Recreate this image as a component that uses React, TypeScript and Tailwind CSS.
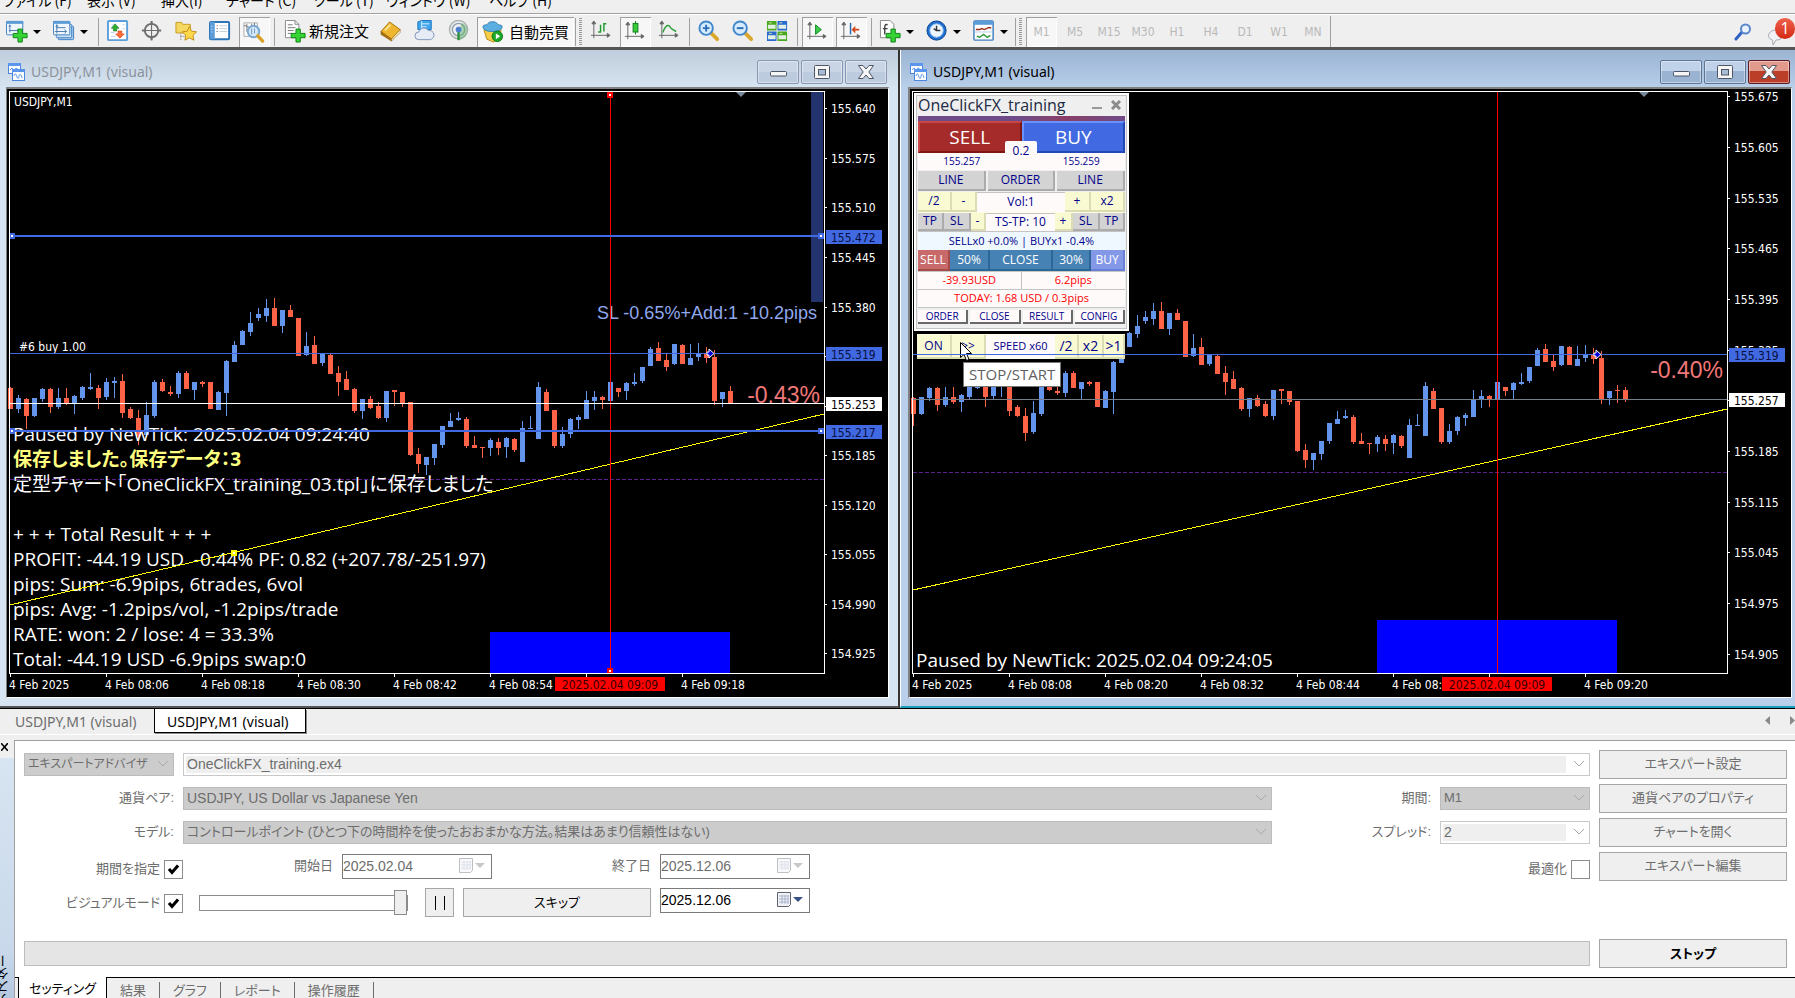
import * as React from "react";

type Candle = [string, number, number, number, number];

// color, high, body top, body bottom, low (steps below TOP_PRICE)
const TOP_PRICE = 155.4145;
const STEP = 0.000437;

const candles: Candle[] = [
  ["r", 320, 323, 387, 387], ["b", 345, 354, 387, 399], ["r", 354, 357, 408, 447],
  ["b", 354, 354, 408, 411], ["b", 323, 327, 357, 366], ["r", 323, 327, 381, 399],
  ["b", 323, 354, 381, 387], ["r", 323, 354, 371, 375], ["b", 345, 348, 371, 402],
  ["b", 318, 321, 354, 360], ["b", 279, 321, 327, 330], ["r", 315, 324, 354, 387],
  ["b", 294, 306, 351, 360], ["b", 291, 303, 309, 354], ["r", 282, 303, 399, 414],
  ["r", 381, 387, 414, 417], ["r", 390, 414, 468, 495], ["b", 366, 405, 465, 471],
  ["b", 300, 306, 408, 414], ["r", 297, 306, 333, 336], ["r", 318, 336, 342, 348],
  ["b", 273, 279, 342, 354], ["r", 273, 279, 327, 327], ["b", 306, 306, 330, 360],
  ["r", 303, 306, 312, 321], ["r", 306, 306, 387, 387], ["b", 333, 336, 390, 390],
  ["b", 240, 243, 339, 408], ["b", 183, 195, 246, 246], ["b", 150, 153, 195, 195],
  ["b", 96, 129, 156, 168], ["b", 84, 102, 114, 123], ["b", 57, 84, 108, 126],
  ["r", 54, 84, 138, 138], ["b", 90, 90, 138, 159], ["r", 75, 90, 111, 111],
  ["r", 114, 114, 228, 228], ["b", 156, 198, 225, 228], ["r", 168, 195, 252, 252],
  ["b", 222, 222, 249, 258], ["r", 222, 225, 282, 282], ["r", 258, 279, 306, 348],
  ["r", 273, 297, 330, 330], ["r", 324, 327, 393, 399], ["b", 357, 357, 393, 417],
  ["r", 348, 357, 384, 387], ["r", 366, 378, 414, 417], ["b", 333, 333, 414, 426],
  ["r", 330, 330, 336, 378], ["r", 336, 336, 370, 381], ["r", 366, 366, 525, 528],
  ["r", 504, 522, 552, 579], ["b", 531, 531, 555, 585], ["b", 492, 492, 534, 555],
  ["b", 438, 438, 495, 504], ["b", 399, 423, 441, 441], ["b", 396, 414, 420, 423],
  ["r", 411, 417, 498, 504], ["r", 468, 495, 504, 504], ["r", 501, 501, 504, 534],
  ["b", 474, 480, 504, 528], ["r", 474, 486, 504, 525], ["b", 471, 474, 501, 534],
  ["r", 474, 477, 510, 516], ["b", 423, 444, 546, 546], ["b", 408, 444, 447, 447],
  ["b", 306, 321, 477, 477], ["r", 327, 336, 393, 393], ["r", 390, 390, 498, 504],
  ["b", 441, 462, 498, 504], ["b", 414, 417, 462, 474], ["b", 405, 411, 420, 447],
  ["b", 333, 360, 417, 417], ["b", 333, 351, 363, 390], ["r", 348, 351, 360, 387],
  ["b", 306, 306, 363, 363], ["r", 324, 324, 336, 351], ["b", 306, 309, 333, 360],
  ["b", 279, 306, 312, 318], ["b", 261, 261, 303, 309], ["b", 201, 207, 258, 258],
  ["r", 186, 204, 243, 243], ["r", 222, 240, 261, 273], ["b", 192, 192, 252, 255],
  ["r", 192, 195, 252, 252], ["b", 192, 234, 255, 255], ["b", 189, 222, 231, 243],
  ["r", 201, 222, 234, 249], ["r", 210, 231, 363, 375], ["b", 336, 336, 357, 381],
  ["r", 318, 333, 370, 370],
];

const candlesRight: Candle[] = [
  ...candles.slice(2, 90),
  ["r", 316, 331, 333, 373],
  ["r", 322, 331, 363, 369],
];

interface ChartProps {
  base: number;
  scale: number;
  data: Candle[];
  prices: number[];
  times: string[];
  tags: { price: number; white?: boolean }[];
  cursorX: number;
  block: { x: number; y: number };
  trend: [number, number];
  purple: number;
  arrow: number;
  children?: React.ReactNode;
  under?: React.ReactNode;
  over?: React.ReactNode;
}

const Chart: React.FC<ChartProps> = (p) => {
  const y = (price: number) => Math.round(p.base + (155.319 - price) * p.scale);
  const yc = (v: number) => y(TOP_PRICE - v * STEP);

  return (
    <div className="relative flex-1 min-w-0 overflow-hidden bg-black font-['DejaVu_Sans_Condensed','DejaVu_Sans',sans-serif] text-xs text-white">
      <svg className="absolute inset-0 h-full w-full" shapeRendering="crispEdges">
        <svg y="100%" overflow="visible">
          <rect x={p.block.x} y={p.block.y} width={240} height={-24 - p.block.y} fill="#0000ff" />
        </svg>
        {p.under}
        {p.data.map(([c, h, t, b, l], i) => {
          const x = 3 + i * 8;
          const fill = c === "r" ? "#ff6347" : "#6495ed";
          return (
            <g key={i} fill={fill}>
              <rect x={x} y={yc(h)} width={1} height={Math.max(1, yc(l) - yc(h))} />
              <rect x={x - 2} y={yc(t)} width={5} height={Math.max(1, yc(b) - yc(t))} />
            </g>
          );
        })}
        <line x1={3} x2="100%" y1={p.purple} y2={p.purple} stroke="#5a1f8a" strokeDasharray="4 2" />
      </svg>
      {p.children}
      <svg className="pointer-events-none absolute inset-0 h-full w-full" fill="#fff">
        <g shapeRendering="crispEdges">
          <svg x="100%" overflow="visible">
            <line x1={-878} y1={p.trend[0]} x2={-64} y2={p.trend[1]} stroke="#ffff00" />
          </svg>
          <rect x={p.cursorX} y={3} width={1} height="100%" fill="#ff0000" />
          {p.over}
          <svg x="100%" overflow="visible">
            <rect x={-64} y={2} width={64} height={1000} fill="#000" />
          </svg>
          <svg y="100%" overflow="visible">
            <rect x={0} y={-24} width="100%" height={24} fill="#000" />
            <rect x={2} y={-24} width={816} height={1} />
            {p.times.map((_, i) => (
              <rect key={i} x={3 + i * 96} y={-23} width={1} height={3} />
            ))}
          </svg>
          <rect x={2} y={2} width={816} height={1} />
          <rect x={2} y={2} width={1} height={583} />
          <svg x="100%" overflow="visible">
            <rect x={-64} y={2} width={1} height={583} />
            {p.prices.map((v) => (
              <rect key={v} x={-63} y={y(v)} width={2} height={1} />
            ))}
          </svg>
        </g>
        <path
          d={`M${p.arrow - 3} ${p.base - 1}h2v-3l5 4.500l-5 4.500v-3h-2z`}
          fill="#0000e0"
          stroke="#fff"
        />
        <svg x="100%" overflow="visible">
          <path d="M-152 3h10l-5 5z" fill="#778899" />
          {p.prices.map((v) => (
            <text key={v} x={-57} y={y(v) + 5}>{v.toFixed(3)}</text>
          ))}
          {p.tags.map((t) => (
            <g key={t.price}>
              <rect x={-62} y={y(t.price) - 6} width={56} height={14} fill={t.white ? "#fff" : "#4169e1"} />
              <text x={-57} y={y(t.price) + 6} fill={t.white ? "#000" : "#071040"}>
                {t.price.toFixed(3)}
              </text>
            </g>
          ))}
        </svg>
        <svg y="100%" overflow="visible">
          {p.times.map((t, i) => (
            <text key={i} x={2 + i * 96} y={-8}>{t}</text>
          ))}
          <rect x={p.cursorX - 55} y={-20} width={110} height={14} fill="#ff0000" />
          <text x={p.cursorX} y={-8} fill="#300" textAnchor="middle">2025.02.04 09:09</text>
        </svg>
      </svg>
    </div>
  );
};

/* ---------- MDI window ---------- */

const WinButton: React.FC<{ kind: string; active?: boolean }> = ({ kind, active }) => {
  let cls = "border-[#8895b3] bg-linear-to-b from-[#c9d5e5] from-50% to-[#bccbde] to-50%";
  if (active) cls = "border-[#5f7596] bg-linear-to-b from-[#bfd2ea] from-45% to-[#9ab3d2] to-45%";
  if (active && kind === "close") cls = "border-[#5a1a20] bg-linear-to-b from-[#e29a8c] from-45% to-[#bb3f28] to-45%";
  return (
    <button
      aria-label={kind}
      className={`flex h-6 w-[42px] items-center justify-center rounded-xs border shadow-[inset_0_0_0_1px_rgba(255,255,255,0.4)] ${cls}`}
    >
      <svg width="20" height="18" viewBox="0 0 20 18" fill="#f6f6f6" stroke="#4d5566">
        {kind === "min" && <rect x="2.5" y="8.5" width="16" height="4.500" rx="1" />}
        {kind === "max" && (
          <>
            <rect x="2.5" y="2.5" width="15" height="13" rx="1" />
            <rect x="6.500" y="6.500" width="7" height="5.500" fill="#a9bbd3" />
          </>
        )}
        {kind === "close" && (
          <path d="M2.500 2.500h4.500l3 3.500 3-3.500h4.500l-4.700 6.500 4.700 6.500h-4.500l-3-3.500-3 3.500h-4.500l4.700-6.500z" />
        )}
      </svg>
    </button>
  );
};

const ChartIcon = () => (
  <svg width="18" height="18" viewBox="0 0 18 18">
    <rect x="0.500" y="0.500" width="12" height="10" fill="#fff" stroke="#4a86e0" />
    <path d="M0 0h13v3h-13z" fill="#5a96ee" />
    <path d="M2 7l2-2 2 3 2-3 3 2" stroke="#5a96ee" fill="none" />
    <rect x="4.500" y="6.500" width="12" height="11" fill="#fff" stroke="#4a86e0" />
    <path d="M4 6h13v3h-13z" fill="#5a96ee" />
    <path d="M6 13c1-4 2-2 3 1s2 1 2-1 2-3 3 2" stroke="#5a96ee" fill="none" />
  </svg>
);

const ChartWindow: React.FC<{ active?: boolean; children: React.ReactNode }> = ({ active, children }) => (
  <section
    className={
      active
        ? "flex min-w-0 flex-col border-b-2 border-l border-b-[#1c9fb8] border-l-white bg-[#b9cfea] bg-linear-to-b from-[#9ab4d2] to-[#b9cfea] to-[38px] pr-[3px] pb-2 pl-[7px]"
        : "flex min-w-0 flex-col border-r-2 border-b-2 border-r-[#333] border-b-[#555] bg-[#d7e4f1] bg-linear-to-b from-[#bfcddc] to-[#d7e4f1] to-[38px] pr-[9px] pb-2 pl-[6px]"
    }
  >
    <header className="flex h-[37px] shrink-0 items-center gap-[5px] pt-[6px] pr-[2px] pl-[2px]">
      <ChartIcon />
      <h2 className={`font-['Noto_Sans','Open_Sans',sans-serif] text-[14px] ${active ? "text-black" : "text-[#8b939c]"}`}>
        USDJPY,M1 (visual)
      </h2>
      <div className="ml-auto flex gap-[2px]">
        <WinButton kind="min" active={active} />
        <WinButton kind="max" active={active} />
        <WinButton kind="close" active={active} />
      </div>
    </header>
    <div
      className={`flex flex-1 border-t-2 border-r border-b border-t-[#808080] border-r-white border-b-white ${
        active ? "border-l-2 border-l-[#808080]" : "border-l border-l-[#808080]"
      }`}
    >
      {children}
    </div>
  </section>
);

/* ---------- toolbar ---------- */

const Plus = () => (
  <path d="M12.500 9.500h4.500v4.500h5v4.500h-5v4.500h-4.500v-4.500h-5v-4.500h5z" fill="#35d335" stroke="#0c8412" />
);
const Axes = () => (
  <path d="M4 3v16M1 16h18M4 1l-2 3h4zM21 16l-3-2v4z" stroke="#666" fill="#666" />
);

const icons: Record<string, React.ReactNode> = {
  newChart: (
    <>
      <rect x="0.500" y="1.500" width="17" height="14" rx="1" fill="#eef6fd" stroke="#3f7fc0" />
      <path d="M0 1h18v3h-18z" fill="#5a9bd8" />
      <path d="M4 6v7M3 11h10M3 7l1-2 1 2M12 10l2 1-2 1" stroke="#4a7bb0" fill="none" />
      <Plus />
    </>
  ),
  profiles: (
    <>
      <rect x="5.500" y="6.500" width="16" height="14" rx="1" fill="#a9cdf0" stroke="#3f7fc0" />
      <rect x="3.500" y="4.500" width="16" height="14" rx="1" fill="#c9e0f6" stroke="#3f7fc0" />
      <rect x="0.500" y="1.500" width="17" height="14" rx="1" fill="#eef6fd" stroke="#3f7fc0" />
      <path d="M0 1h18v3h-18z" fill="#5a9bd8" />
      <path d="M4 5v9M2 12h12M3 7l1-2 1 2M3 8h10M12 10l2 2-2 2" stroke="#4a7bb0" fill="none" />
    </>
  ),
  market: (
    <>
      <rect x="1" y="1" width="20" height="20" rx="1" fill="#fff" stroke="#5aa0dc" strokeWidth="2" />
      <path d="M5 5h2M16 5h3M5 9h1M16 9h3M4 13h4M4 17h5" stroke="#bcd6ee" />
      <path d="M8.500 4l4 4.500h-2.200v3h-3.600v-3H4.500z" fill="#2faf2f" stroke="#15781a" strokeWidth="0.600" />
      <path d="M13.500 19l-4.500-4.500h2.500v-3h4v3H18z" fill="#ff6a3a" stroke="#c43a12" strokeWidth="0.600" />
    </>
  ),
  crosshair: (
    <g fill="none" stroke="#6e6e6e">
      <circle cx="11" cy="11" r="7" strokeWidth="2" />
      <path d="M11 1v20M1 11h20" strokeWidth="1.200" />
      <path d="M11 1v4M11 17v4M1 11h4M17 11h4" strokeWidth="2.200" />
    </g>
  ),
  folder: (
    <>
      <path d="M1 2.500h6l1 2h8v9H1z" fill="#f5d860" stroke="#c79a20" />
      <path d="M6 14v8M6 17h5" stroke="#777" strokeDasharray="1 1" fill="none" />
      <path d="M15 7l2.300 4.700 5.200.7-3.800 3.600 1 5.100-4.700-2.500-4.700 2.500 1-5.100-3.800-3.600 5.200-.7z" fill="#ffd84a" stroke="#c48a14" />
    </>
  ),
  panel: (
    <>
      <rect x="1" y="2" width="20" height="18" rx="1" fill="#fff" stroke="#2e75b8" strokeWidth="2" />
      <path d="M1 2h5v18H1z" fill="#5a9bd8" />
      <path d="M3 6v1M3 9v1M3 12v1" stroke="#fff" />
      <path d="M8 6h1" stroke="#d33" />
      <path d="M8 9h1M8 12h1" stroke="#345" />
      <path d="M11 6h8M11 9h8M11 12h8" stroke="#c3cfda" />
    </>
  ),
  tester: (
    <>
      <path d="M1 2h14v14H1z" fill="#fff" stroke="#aaa" />
      <path d="M4 3v8M4 6h2M9 3v6M12 2v6M1 5h3" stroke="#777" fill="none" />
      <circle cx="11" cy="11" r="6" fill="#cfe6fa" fillOpacity="0.850" stroke="#7aa6d4" strokeWidth="2" />
      <path d="M9 8v6M12 8v5" stroke="#6f94bd" />
      <path d="M15.500 15.500l5 5.500" stroke="#d9a126" strokeWidth="3.500" strokeLinecap="round" />
    </>
  ),
  order: (
    <>
      <path d="M1.500 0.500h10l4 4v14h-14z" fill="#fdfdfd" stroke="#888" />
      <path d="M11.500 0.500v4h4" fill="none" stroke="#888" />
      <path d="M4 5h5M4 8h8M4 11h6M4 14h4" stroke="#777" />
      <Plus />
    </>
  ),
  book: (
    <>
      <path d="M1 12l9-10 11 8-9 10z" fill="#eeb52e" stroke="#a87410" />
      <path d="M1 12v3l11 7v-2z" fill="#a8700f" stroke="#94640c" strokeWidth="0.600" />
      <path d="M12 22l9-9v-3l-9 10z" fill="#fff4c8" stroke="#94640c" strokeWidth="0.600" />
      <path d="M5 11l6-6" stroke="#fbe28c" strokeWidth="2" />
    </>
  ),
  cloud: (
    <>
      <path d="M4 2l4-1.500h10V10H4z" fill="#3fa6ee" stroke="#1b74bd" />
      <path d="M8 4h8M8 7h5M8 1v9" stroke="#d8efff" />
      <path d="M5 20.500a4 4 0 010-8 5.500 5.500 0 0110-1.500 4.800 4.800 0 012 9.500z" fill="#e6ecf6" stroke="#7f93b8" />
    </>
  ),
  signal: (
    <>
      <g fill="none" stroke="#a9b1b1">
        <circle cx="11" cy="10" r="9.500" strokeWidth="1.500" />
        <circle cx="11" cy="10" r="6.500" strokeWidth="1.500" stroke="#8fa0b0" />
      </g>
      <path d="M11 10v11a10 10 0 009-9a9.500 9.500 0 00-5-9z" fill="#5fb46a" fillOpacity="0.500" />
      <path d="M11 10v11" stroke="#2f8f3c" strokeWidth="2.500" />
      <circle cx="11" cy="10" r="3" fill="#4a7fd0" />
    </>
  ),
  auto: (
    <>
      <path d="M2 9l3 10 7 3 6-4 2-9z" fill="#f5cc48" stroke="#b98a18" />
      <path d="M1 6c0-3 5-1 5-3 1-3 9-3 10 0 0 2 5 0 5 3s-4 5-10 5S1 9 1 6z" fill="#5aaee0" stroke="#2e7fb5" />
      <circle cx="16" cy="16" r="5.500" fill="#20a828" stroke="#0d7a14" />
      <path d="M14.500 13l4.500 3-4.500 3z" fill="#fff" />
    </>
  ),
  bars: (
    <>
      <Axes />
      <path d="M11 5v8M8.500 12.500h3M14.500 3v9M14 4h3" stroke="#1c9a2c" strokeWidth="1.500" fill="none" />
    </>
  ),
  candle: (
    <>
      <Axes />
      <path d="M12 0v14" stroke="#127a1c" />
      <rect x="9.500" y="2.500" width="5" height="9" fill="#35cf35" stroke="#127a1c" />
    </>
  ),
  line: (
    <>
      <Axes />
      <path d="M5 13c3-8 6-9 8-5 2 2 4 3 6 4" stroke="#2ca03a" strokeWidth="1.500" fill="none" />
    </>
  ),
  zoomIn: (
    <>
      <path d="M13 13l7 7" stroke="#dba62c" strokeWidth="4" strokeLinecap="round" />
      <circle cx="8.500" cy="8.500" r="7" fill="#d6ecfc" stroke="#3f86cc" strokeWidth="2" />
      <path d="M8.500 5v7M5 8.500h7" stroke="#2a6cb8" strokeWidth="2" />
    </>
  ),
  zoomOut: (
    <>
      <path d="M13 13l7 7" stroke="#dba62c" strokeWidth="4" strokeLinecap="round" />
      <circle cx="8.500" cy="8.500" r="7" fill="#d6ecfc" stroke="#3f86cc" strokeWidth="2" />
      <path d="M5 8.500h7" stroke="#2a6cb8" strokeWidth="2" />
    </>
  ),
  tile: (
    <>
      <path d="M1 1h10v10H1zM12 12h10v10H12z" fill="#4aa81e" />
      <path d="M12 1h10v10H12zM1 12h10v10H1z" fill="#2a6ad0" />
      <path d="M2 5h8v4H2z M13 5h8v4h-8z M2 16h8v4H2z M13 16h8v4h-8z" fill="#e2f0e4" />
      <path d="M3 3h3M14 3h3M3 14h3M14 14h3" stroke="#cfe6a8" />
    </>
  ),
  scroll: (
    <>
      <Axes />
      <path d="M10 4l6 5-6 5z" fill="#3ccb4a" stroke="#128a22" />
    </>
  ),
  shift: (
    <>
      <Axes />
      <path d="M11 2v12" stroke="#1f66b0" strokeWidth="1.500" />
      <path d="M12 9l4-4v3h4v2h-4v3z" fill="#d2491c" />
    </>
  ),
  indicators: (
    <>
      <path d="M1.500 0.500h10l4 4v14h-14z" fill="#fdfdfd" stroke="#888" />
      <path d="M9 5c-3-1-3 1-3 4v6M4 9h5" stroke="#444" fill="none" strokeWidth="1.500" />
      <Plus />
    </>
  ),
  clock: (
    <>
      <circle cx="11" cy="11" r="10" fill="#1f6fd0" stroke="#0c458f" />
      <circle cx="11" cy="11" r="7" fill="#eef6fd" stroke="#8fc0f0" />
      <path d="M11 6v5h4M8 9l3 2" stroke="#333" strokeWidth="1.500" fill="none" />
    </>
  ),
  template: (
    <>
      <rect x="1" y="1" width="20" height="20" rx="1" fill="#fff" stroke="#3f7fc0" strokeWidth="1.500" />
      <path d="M1 1h20v4H1z" fill="#5a9bd8" />
      <path d="M3 10h4l2-1 3 1 4-2h3" stroke="#9a2f1a" strokeWidth="1.500" fill="none" />
      <path d="M2 12.500h18" stroke="#b9cfe6" />
      <path d="M4 17l3 1 4-3 4 3 3-2" stroke="#2f9a3a" strokeWidth="1.500" fill="none" />
    </>
  ),
};

const Icon: React.FC<{ name: string }> = ({ name }) => (
  <svg width="23" height="23" viewBox="0 0 24 24" className="shrink-0">{icons[name]}</svg>
);

const pressedCls = "border-t border-l border-[#a0a0a0] bg-[#f7f7f7] shadow-[inset_-1px_-1px_0_#fff]";

const Tool: React.FC<{ name: string; pressed?: boolean }> = ({ name, pressed }) => (
  <button aria-label={name} className="flex w-[34px] items-center justify-center">
    <span className={`flex h-[30px] w-[31px] items-center justify-center ${pressed ? pressedCls : ""}`}>
      <Icon name={name} />
    </span>
  </button>
);

const DropTool: React.FC<{ name: string }> = ({ name }) => (
  <button aria-label={name} className="flex w-[47px] items-center gap-1 pl-[5px]">
    <Icon name={name} />
    <svg width="8" height="4" className="shrink-0"><path d="M0 0h8l-4 4z" /></svg>
  </button>
);

const Sep = () => (
  <span className="flex w-[6px] justify-center"><i className="h-7 w-px bg-[#a0a0a0]" /></span>
);

const Grip = () => (
  <span className="flex w-[9px] items-center justify-between border-l border-[#a0a0a0] pl-[3px]">
    <i className="h-7 w-[3px] bg-[repeating-linear-gradient(#9a9a9a_0_1px,#efefef_1px_2px)]" />
  </span>
);

const menus = [
  ["ファイル (F)", "w-[84px]"],
  ["表示 (V)", "w-[74px]"],
  ["挿入(I)", "w-[65px]"],
  ["チャート (C)", "w-[87px]"],
  ["ツール (T)", "w-[73px]"],
  ["ウィンドウ (W)", "w-[103px]"],
  ["ヘルプ (H)", "w-[80px]"],
];

const Toolbar = () => (
  <div className="flex h-9 shrink-0 items-center border-t border-b-3 border-t-white border-b-[#555] pt-px pl-px font-['Noto_Sans_CJK_JP',sans-serif] text-[15px]">
    <DropTool name="newChart" />
    <DropTool name="profiles" />
    <Sep />
    <Tool name="market" />
    <Tool name="crosshair" />
    <Tool name="folder" />
    <Tool name="panel" />
    <Tool name="tester" pressed />
    <Sep />
    <button className="flex w-[97px] items-center gap-[2px] pl-[7px] whitespace-nowrap">
      <Icon name="order" />
      新規注文
    </button>
    <Tool name="book" />
    <Tool name="cloud" />
    <Tool name="signal" />
    <button className={`mx-px flex h-[30px] w-[97px] items-center gap-1 pl-1 whitespace-nowrap ${pressedCls}`}>
      <Icon name="auto" />
      自動売買
    </button>
    <Grip />
    <Tool name="bars" />
    <Tool name="candle" pressed />
    <Tool name="line" />
    <Sep />
    <Tool name="zoomIn" />
    <Tool name="zoomOut" />
    <Tool name="tile" />
    <Sep />
    <Tool name="scroll" pressed />
    <Tool name="shift" pressed />
    <Sep />
    <DropTool name="indicators" />
    <DropTool name="clock" />
    <DropTool name="template" />
    <Grip />
    {["M1", "M5", "M15", "M30", "H1", "H4", "D1", "W1", "MN"].map((t) => (
      <button key={t} className="flex w-[34px] justify-center font-['DejaVu_Sans_Condensed',sans-serif] text-xs text-[#b9b9b9]">
        <span className={`flex h-[30px] w-[31px] items-center justify-center ${t === "M1" ? pressedCls : ""}`}>{t}</span>
      </button>
    ))}
    <i className="h-full w-px bg-[#a0a0a0]" />
    <button aria-label="search" className="mr-[15px] ml-auto">
      <svg width="18" height="18" viewBox="0 0 18 18">
        <path d="M8 9l-6 7" stroke="#2f62c4" strokeWidth="3" strokeLinecap="round" />
        <circle cx="11.500" cy="6" r="4.500" fill="#eaf2fd" stroke="#5a86cc" strokeWidth="2" />
      </svg>
    </button>
    <button aria-label="messages" className="relative h-7 w-7">
      <svg width="18" height="18" className="absolute bottom-0 left-0">
        <path d="M8 2c9-2 11 10 1 10l-3 5-.5-5C-1 10 1 3 8 2z" fill="#f2f2f6" stroke="#a8a8b0" />
      </svg>
      <span className="absolute top-0 right-0 flex h-[21px] w-5 items-center justify-center rounded-full bg-linear-to-b from-[#f0604a] to-[#d32410] font-['Open_Sans',sans-serif] text-base text-white">1</span>
    </button>
  </div>
);

/* ---------- OneClickFX panel ---------- */

const grayBtn = "border-r-2 border-b-2 border-[#ababab] bg-[#d3d3d3]";
const creamBtn = "border-r-2 border-b-2 border-[#dcdcb4] bg-[#fafad2]";
const steelBtn = "border-r-2 border-b-2 border-[#2c6797] bg-[#4682b4] text-white";

const OneClickPanel = () => (
  <div className="absolute top-1 left-1 w-[215px] border-2 border-white bg-[#c4c4c4] font-['Open_Sans',sans-serif] text-xs font-medium text-[#00008b]">
    <div className="m-px bg-[#efefef] px-px pb-1">
      <div className="flex h-5 items-center justify-between pr-1 pb-[2px]">
        <h3 className="text-[16px] leading-4 text-[#222a44]">OneClickFX_training</h3>
        <div className="flex gap-2">
          <button aria-label="minimize panel">
            <svg width="11" height="10"><path d="M0 8h10" stroke="#999" strokeWidth="2" /></svg>
          </button>
          <button aria-label="close panel">
            <svg width="10" height="10"><path d="M1 1l8 8M9 1l-8 8" stroke="#8a8a8a" strokeWidth="3" /></svg>
          </button>
        </div>
      </div>
      <div className="h-[5px] bg-linear-to-r from-[#6f4a88] from-50% via-[#8a3f66] via-70% to-[#6f4a88]" />
      <div className="relative">
        <div className="grid h-8 grid-cols-2 text-[19px] text-white">
          <button className="border-2 border-[#7e1616] border-t-[#c84848] border-l-[#c84848] bg-[#a52a2a] leading-7">SELL</button>
          <button className="border-2 border-[#2248b8] border-t-[#6a92ff] border-l-[#6a92ff] bg-[#4169e1] leading-7">BUY</button>
        </div>
        <div className="flex h-[17px] items-center justify-around gap-8 bg-[#fffafa] text-[10px]">
          <span>155.257</span>
          <span>155.259</span>
        </div>
        <span className="absolute top-5 left-[87px] flex h-5 w-8 items-center justify-center rounded-xs bg-[#fffafa]">0.2</span>
      </div>
      <div className="grid h-[22px] grid-cols-3 gap-[2px] py-px leading-[18px]">
        <button className={grayBtn}>LINE</button>
        <button className={grayBtn}>ORDER</button>
        <button className={grayBtn}>LINE</button>
      </div>
      <div className="grid h-[21px] grid-cols-[34px_25px_1fr_26px_34px] bg-[#fffde0] pb-px leading-[18px]">
        <button className={creamBtn}>/2</button>
        <button className={creamBtn}>-</button>
        <span className="border-t border-[#c4c4c4] bg-[#fffafa] text-center">Vol:1</span>
        <button className={creamBtn}>+</button>
        <button className={creamBtn}>x2</button>
      </div>
      <div className="grid h-[18px] grid-cols-[26px_27px_15px_1fr_18px_27px_25px] leading-4">
        <button className={grayBtn}>TP</button>
        <button className={grayBtn}>SL</button>
        <button className={creamBtn}>-</button>
        <span className="border-t border-[#c4c4c4] bg-[#fffafa] text-center leading-[15px]">TS-TP: 10</span>
        <button className={creamBtn}>+</button>
        <button className={grayBtn}>SL</button>
        <button className={grayBtn}>TP</button>
      </div>
      <p className="h-[19px] border-t border-[#c4c4c4] bg-[#f0f8ff] text-center text-[11px] leading-[18px] whitespace-pre">SELLx0 +0.0% | BUYx1 -0.4%</p>
      <div className="grid h-[21px] grid-cols-[32px_40px_1fr_38px_34px] leading-[19px]">
        <button className="border-r-2 border-b-2 border-[#a84a4a] bg-[#c86a6a] text-white">SELL</button>
        <button className={steelBtn}>50%</button>
        <button className={steelBtn}>CLOSE</button>
        <button className={steelBtn}>30%</button>
        <button className="border-r-2 border-b-2 border-[#6a80d8] bg-[#8498e8] text-white">BUY</button>
      </div>
      <div className="grid h-[18px] grid-cols-2 border-t border-[#c4c4c4] bg-[#fffafa] text-center text-[11px] leading-4 text-[#ff0000]">
        <span className="border-r border-[#c4c4c4]">-39.93USD</span>
        <span>6.2pips</span>
      </div>
      <p className="mb-[2px] h-[19px] border-t border-b border-[#c4c4c4] bg-[#fffafa] text-center text-[11px] leading-4 text-[#ff0000]">
        TODAY: 1.68 USD / 0.3pips
      </p>
      <div className="grid grid-cols-4 gap-[2px] text-[10px] leading-3">
        {["ORDER", "CLOSE", "RESULT", "CONFIG"].map((t) => (
          <button key={t} className="border-r-2 border-b-2 border-[#696969] bg-[#fffafa]">{t}</button>
        ))}
      </div>
    </div>
  </div>
);

const SpeedStrip = () => (
  <div className="absolute top-[245px] left-[7px] grid h-6 w-[208px] grid-cols-[35px_34px_1fr_24px_25px_21px] border-t border-[#fffde0] bg-[#fffde0] font-['Open_Sans',sans-serif] text-xs leading-[22px] font-medium text-[#00008b]">
    <button className={creamBtn}>ON</button>
    <button className={creamBtn}>&gt;&gt;</button>
    <span className="bg-[#fffafa] text-center text-[11px]">SPEED x60</span>
    <button className={`${creamBtn} text-sm`}>/2</button>
    <button className={`${creamBtn} text-sm`}>x2</button>
    <button className={`${creamBtn} text-sm`}>&gt;1</button>
  </div>
);

/* ---------- strategy tester ---------- */

const Chevron = () => (
  <svg width="10" height="6" className="pointer-events-none shrink-0"><path d="M0 0l5 5 5-5" fill="none" stroke="#a8a8a8" /></svg>
);

const Combo: React.FC<{ id: string; value: string; editable?: boolean; className?: string }> = ({
  id,
  value,
  editable,
  className = "",
}) => (
  <div
    className={`flex h-[23px] items-center border pr-[5px] ${
      editable ? "border-[#c9c9c9] bg-white" : "border-[#bcbcbc] bg-[#cccccc]"
    } ${className}`}
  >
    <select
      id={id}
      disabled
      aria-label={value}
      className={`min-w-0 flex-1 appearance-none overflow-hidden text-clip pl-[3px] text-[#6d6d6d] opacity-100 ${
        editable ? "m-[2px] mr-2 h-[17px] bg-[#efefef] pl-px leading-[17px]" : "bg-transparent"
      }`}
    >
      <option>{value}</option>
    </select>
    <Chevron />
  </div>
);

const DateBox: React.FC<{ id: string; value: string; enabled?: boolean }> = ({ id, value, enabled }) => (
  <div className="flex h-[25px] w-[150px] items-center border border-[#7a7a7a] bg-white pr-[6px] text-[14px]">
    <input
      id={id}
      aria-label={value}
      defaultValue={value}
      disabled={!enabled}
      className={`w-full min-w-0 ${enabled ? "text-black" : "text-[#6d6d6d]"}`}
    />
    <button aria-label="calendar" disabled={!enabled} className={`flex items-center gap-[2px] ${enabled ? "" : "opacity-40"}`}>
      <svg width="14" height="16">
        <path d="M0.500 0.500h13v12l-2 2h-11z" fill="#f2f2f6" stroke="#5f6270" />
        <path d="M2 4h10M2 7h10M2 10h10M5 3v9M8 3v9M11 3v9" stroke="#a9b4cc" />
      </svg>
      <svg width="10" height="6"><path d="M0 0h10l-5 5z" fill={enabled ? "#3b5288" : "#777"} /></svg>
    </button>
  </div>
);

const Check: React.FC<{ id: string; label: string; checked?: boolean; className?: string }> = ({
  id,
  label,
  checked,
  className = "",
}) => (
  <div className={`flex items-center justify-end gap-1 pt-[6px] ${className}`}>
    <label htmlFor={id}>{label}</label>
    <span className="relative flex h-[19px] w-[19px] shrink-0">
      <input
        id={id}
        type="checkbox"
        defaultChecked={checked}
        className="peer h-full w-full appearance-none border border-[#8c8c8c] bg-white"
      />
      <svg width="11" height="11" className="pointer-events-none absolute top-1 left-1 hidden peer-checked:block">
        <path d="M1 5l3 3.500L10 1.500" fill="none" stroke="#000" strokeWidth="3" />
      </svg>
    </span>
  </div>
);

const SideButton: React.FC<{ children: React.ReactNode; strong?: boolean }> = ({ children, strong }) => (
  <button
    disabled={!strong}
    className={`h-[29px] w-[188px] shrink-0 border border-[#a6a6a6] bg-[#efefef] ${
      strong ? "font-bold text-black" : "text-[#6d6d6d]"
    }`}
  >
    {children}
  </button>
);

const rowCls = "flex h-[34px] items-center gap-[9px]";

const Tester = () => (
  <div className="flex shrink-0 text-[13px]">
    <aside className="flex w-[14px] shrink-0 flex-col overflow-hidden">
      <button aria-label="close tester" className="flex h-[23px] items-center pl-px">
        <svg width="7" height="8"><path d="M0 0l7 8M7 0l-7 8" stroke="#000" strokeWidth="1.500" /></svg>
      </button>
      <div className="flex flex-1 items-end bg-linear-to-b from-[#d7e4f1] via-[#c9d9eb] via-80% to-[#b4c8e0]">
        <span className="-mb-2 -ml-1 rotate-180 leading-4 whitespace-nowrap [writing-mode:vertical-rl]">テスター</span>
      </div>
    </aside>
    <div className="mt-[5px] min-w-0 flex-1 border-t border-l border-[#a0a0a0] bg-white">
      <form className="pt-[6px] pr-2 pl-[9px] text-[#6d6d6d]" onSubmit={(e) => e.preventDefault()}>
        <div className={rowCls}>
          <Combo id="kind" value="エキスパートアドバイザ" className="w-[150px] text-xs" />
          <Combo id="file" value="OneClickFX_training.ex4" editable className="flex-1 text-[14px]" />
          <SideButton>エキスパート設定</SideButton>
        </div>
        <div className={rowCls}>
          <label htmlFor="pair" className="w-[150px] text-right">通貨ペア:</label>
          <Combo id="pair" value="USDJPY, US Dollar vs Japanese Yen" className="flex-1 text-[14px]" />
          <label htmlFor="period" className="w-[150px] text-right">期間:</label>
          <Combo id="period" value="M1" className="w-[150px]" />
          <SideButton>通貨ペアのプロパティ</SideButton>
        </div>
        <div className={rowCls}>
          <label htmlFor="model" className="w-[150px] text-right">モデル:</label>
          <Combo id="model" value="コントロールポイント (ひとつ下の時間枠を使ったおおまかな方法。結果はあまり信頼性はない)" className="flex-1" />
          <label htmlFor="spread" className="w-[150px] text-right">スプレッド:</label>
          <Combo id="spread" value="2" editable className="w-[150px] text-[14px]" />
          <SideButton>チャートを開く</SideButton>
        </div>
        <div className={rowCls}>
          <Check id="useDate" label="期間を指定" checked className="w-[159px]" />
          <label htmlFor="from" className="w-[141px] text-right">開始日</label>
          <DateBox id="from" value="2025.02.04" />
          <label htmlFor="to" className="w-[150px] text-right">終了日</label>
          <DateBox id="to" value="2025.12.06" />
          <Check id="optimize" label="最適化" className="ml-auto" />
          <SideButton>エキスパート編集</SideButton>
        </div>
        <div className={rowCls}>
          <Check id="visual" label="ビジュアルモード" checked className="w-[159px]" />
          <input
            type="range"
            aria-label="speed"
            defaultValue={100}
            className="mt-[6px] mr-2 ml-[7px] h-[25px] w-[209px] appearance-none bg-transparent [&::-webkit-slider-runnable-track]:h-4 [&::-webkit-slider-runnable-track]:border [&::-webkit-slider-runnable-track]:border-[#8c8c8c] [&::-webkit-slider-runnable-track]:bg-white [&::-webkit-slider-thumb]:mt-[-6px] [&::-webkit-slider-thumb]:h-[25px] [&::-webkit-slider-thumb]:w-[13px] [&::-webkit-slider-thumb]:appearance-none [&::-webkit-slider-thumb]:border [&::-webkit-slider-thumb]:border-[#8c8c8c] [&::-webkit-slider-thumb]:bg-[#efefef]"
          />
          <button aria-label="pause" className="mt-[5px] flex h-[29px] w-[29px] items-center justify-center gap-2 border border-[#a6a6a6] bg-[#efefef]">
            <i className="h-[14px] w-px bg-black" />
            <i className="h-[14px] w-px bg-black" />
          </button>
          <button className="mt-[5px] h-[29px] w-[188px] border border-[#a6a6a6] bg-[#efefef] text-black">スキップ</button>
          <DateBox id="skipTo" value="2025.12.06" enabled />
        </div>
        <div className="mt-[22px] mb-[9px] flex items-center gap-[9px]">
          <div className="h-[25px] flex-1 border border-[#bcbcbc] bg-[#e5e5e5]" />
          <SideButton strong>ストップ</SideButton>
        </div>
      </form>
      <nav className="flex h-[21px] border-t border-black bg-[#efefef] text-[#6d6d6d]">
        <a href="#settings" className="-mt-px ml-[3px] w-[89px] border-r border-l border-black bg-white pt-[2px] text-center text-black">セッティング</a>
        {["結果", "グラフ", "レポート", "操作履歴"].map((t) => (
          <a key={t} href={`#${t}`} className="mt-1 border-r border-[#6d6d6d] px-[13px] leading-[17px]">{t}</a>
        ))}
      </nav>
    </div>
  </div>
);

/* ---------- page ---------- */

const Handle: React.FC<{ x: number; y: number; color: string }> = ({ x, y, color }) => (
  <rect x={x - 2} y={y - 2} width={4} height={4} fill="#fff" stroke={color} strokeWidth={2} />
);

const commentCls = "font-['Open_Sans','Noto_Sans_CJK_JP',sans-serif] text-[19px] leading-[25px] whitespace-pre";

export default function App() {
  return (
    <div className="flex h-screen flex-col overflow-hidden bg-[#efefef] font-['Liberation_Sans','Noto_Sans_CJK_JP',sans-serif] text-[14px] text-black [font-feature-settings:'palt']">
      <nav className="flex h-[14px] shrink-0 items-end overflow-hidden border-b border-[#a0a0a0] pb-[3px] pl-[3px] font-['Noto_Sans_CJK_JP',sans-serif] leading-5 whitespace-nowrap">
        {menus.map(([m, w]) => (
          <button key={m} className={`${w} text-left`}>{m}</button>
        ))}
      </nav>
      <Toolbar />

      <main className="grid min-h-0 flex-1 grid-cols-[900fr_895fr]">
        <ChartWindow>
          <Chart
            base={264}
            scale={762}
            data={candles}
            prices={[155.64, 155.575, 155.51, 155.445, 155.38, 155.315, 155.25, 155.185, 155.12, 155.055, 154.99, 154.925]}
            times={["4 Feb 2025", "4 Feb 08:06", "4 Feb 08:18", "4 Feb 08:30", "4 Feb 08:42", "4 Feb 08:54", "", "4 Feb 09:18"]}
            tags={[{ price: 155.472 }, { price: 155.319 }, { price: 155.253, white: true }, { price: 155.217 }]}
            cursorX={603}
            block={{ x: 483, y: -65 }}
            trend={[516, 325]}
            purple={390}
            arrow={703}
            under={<rect x={804} y={3} width={12} height={210} fill="#22336e" />}
            over={
              <>
                <rect x={3} y={264} width="100%" height={1} fill="#4169e1" />
                <rect x={3} y={314} width="100%" height={1} />
                <rect x={3} y={341} width="100%" height={2} fill="#4169e1" />
                <rect x={3} y={146} width="100%" height={2} fill="#4169e1" />
                <Handle x={5} y={342} color="#4169e1" />
                <Handle x={814} y={342} color="#4169e1" />
                <Handle x={5} y={147} color="#4169e1" />
                <Handle x={814} y={147} color="#4169e1" />
                <Handle x={227} y={464} color="#ffff00" />
                <Handle x={603} y={6} color="#ff0000" />
                <Handle x={603} y={582} color="#ff0000" />
              </>
            }
          >
            <span className="absolute top-[5px] left-[7px]">USDJPY,M1</span>
            <span className="absolute top-[250px] left-3">#6 buy 1.00</span>
            <span className="absolute top-[212px] right-[71px] font-['Liberation_Sans',sans-serif] text-[18px] text-[#90a8ee]">
              SL -0.65%+Add:1 -10.2pips
            </span>
            <span className="absolute top-[291px] right-[68px] font-['Liberation_Sans',sans-serif] text-[23px] text-[#f07878]">-0.43%</span>
            <div className={`absolute top-[333px] left-[6px] ${commentCls}`}>
              <p>Paused by NewTick: 2025.02.04 09:24:40</p>
              <p className="font-bold text-[#ffff80]">保存しました。保存データ：3</p>
              <p>定型チャート｢OneClickFX_training_03.tpl｣に保存しました</p>
              <p> </p>
              <p>+ + + Total Result + + +</p>
              <p>PROFIT: -44.19 USD  -0.44% PF: 0.82 (+207.78/-251.97)</p>
              <p>pips: Sum: -6.9pips, 6trades, 6vol</p>
              <p>pips: Avg: -1.2pips/vol, -1.2pips/trade</p>
              <p>RATE: won: 2 / lose: 4 = 33.3%</p>
              <p>Total: -44.19 USD -6.9pips swap:0</p>
            </div>
          </Chart>
        </ChartWindow>

        <ChartWindow active>
          <Chart
            base={265}
            scale={724}
            data={candlesRight}
            prices={[155.675, 155.605, 155.535, 155.465, 155.395, 155.325, 155.255, 155.185, 155.115, 155.045, 154.975, 154.905]}
            times={["4 Feb 2025", "4 Feb 08:08", "4 Feb 08:20", "4 Feb 08:32", "4 Feb 08:44", "4 Feb 08:56", "4 Feb 09:08", "4 Feb 09:20"]}
            tags={[{ price: 155.319 }, { price: 155.257, white: true }]}
            cursorX={587}
            block={{ x: 467, y: -77 }}
            trend={[501, 320]}
            purple={383}
            arrow={687}
            over={
              <>
                <rect x={3} y={265} width="100%" height={1} fill="#4169e1" />
                <rect x={3} y={310} width="100%" height={1} fill="#778088" />
              </>
            }
          >
            <OneClickPanel />
            <SpeedStrip />
            <span className="absolute top-[266px] right-[68px] font-['Liberation_Sans',sans-serif] text-[23px] text-[#f07878]">-0.40%</span>
            <p className={`absolute bottom-6 left-[6px] ${commentCls}`}>Paused by NewTick: 2025.02.04 09:24:05</p>
            <span
              role="tooltip"
              className="absolute top-[273px] left-[53px] border border-[#767676] bg-white px-[5px] font-['Open_Sans',sans-serif] text-[15px] leading-[23px] text-[#5f5f5f]"
            >
              STOP/START
            </span>
            <svg width="13" height="20" className="absolute top-[253px] left-[50px]">
              <path d="M0.500 0.500v15l3.500-3 2.500 6 2.500-1-2.500-6h5z" fill="#fff" stroke="#000" />
            </svg>
          </Chart>
        </ChartWindow>
      </main>

      <nav className="flex h-[27px] shrink-0 border-t border-b border-t-black border-b-white bg-[#efefef] font-['Noto_Sans','Open_Sans',sans-serif] text-[14px] leading-[25px] text-[#6d6d6d]">
        <a href="#chart1" className="w-[154px] pl-[15px]">USDJPY,M1 (visual)</a>
        <a href="#chart2" className="h-6 w-[152px] border-r border-b border-l border-black bg-white pl-3 text-black shadow-[1px_1px_0_#888]">USDJPY,M1 (visual)</a>
        <svg width="30" height="9" className="mt-[7px] ml-auto" fill="#8a8a8a">
          <path d="M5 0v9l-5-4.500zM25 0v9l5-4.500z" />
        </svg>
      </nav>
      <Tester />
    </div>
  );
}
